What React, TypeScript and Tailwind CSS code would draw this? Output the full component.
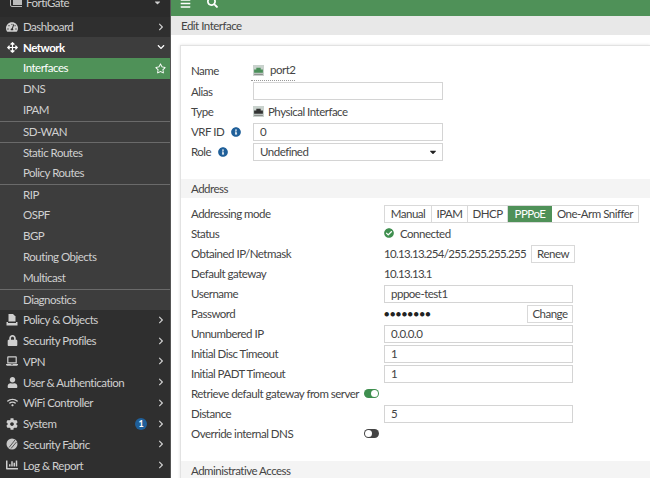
import type { ReactNode } from "react";
import {
  FaBars,
  FaChevronDown,
  FaChevronRight,
  FaSearch,
  FaArrowsAlt,
  FaTachometerAlt,
  FaLock,
  FaLaptop,
  FaUser,
  FaWifi,
  FaCog,
  FaChartBar,
  FaInfoCircle,
  FaCheckCircle,
  FaRegStar,
  FaCaretDown,
} from "react-icons/fa";

type SideItem = { label: string; icon: ReactNode; badge?: boolean };

const SUB_GROUPS = [
  ["DNS", "IPAM"],
  ["SD-WAN"],
  ["Static Routes", "Policy Routes"],
  ["RIP", "OSPF", "BGP", "Routing Objects", "Multicast"],
  ["Diagnostics"],
];

const LOWER_ITEMS: SideItem[] = [
  { label: "Policy & Objects", icon: <PolicyIcon /> },
  { label: "Security Profiles", icon: <FaLock size={11} /> },
  { label: "VPN", icon: <FaLaptop size={12} /> },
  { label: "User & Authentication", icon: <FaUser size={11} /> },
  { label: "WiFi Controller", icon: <FaWifi size={11} /> },
  { label: "System", icon: <FaCog size={12} />, badge: true },
  { label: "Security Fabric", icon: <FabricIcon /> },
  { label: "Log & Report", icon: <FaChartBar size={12} /> },
];

function PolicyIcon() {
  return (
    <svg width="12" height="12" viewBox="0 0 12 12" fill="#cfcfcf">
      <path d="M2.500 0H7l2.500 2.500V7.500H2.500z" />
      <path d="M0.500 8h1.500v1H10V8h1.500v3.500H0.500z" />
    </svg>
  );
}

function FabricIcon() {
  return (
    <svg width="12" height="12" viewBox="0 0 12 12">
      <circle cx="6" cy="6" r="5.5" fill="#c8c8c8" />
      <path d="M3 9.500 9 2M5 10.500 10.500 4" stroke="#555" strokeWidth="1" />
    </svg>
  );
}

function PortIcon({ dark }: { dark?: boolean }) {
  return (
    <svg width="11" height="11" viewBox="0 0 10 10" className="shrink-0">
      <rect x="0" y="0" width="10" height="10" fill="#c9d2cd" />
      <path d="M1 7V4h2V2.500h4V4h2v3z" fill={dark ? "#333" : "#4b8f5a"} />
      <rect x="1" y="8" width="8" height="1" fill="#888" />
    </svg>
  );
}

function SideRow({ item }: { item: SideItem }) {
  return (
    <div className="flex h-[20.750px] items-center bg-[#2f2f2f] text-[#d0d0d0]">
      <span className="flex w-[23px] shrink-0 justify-center pl-[1px] text-[#cfcfcf]">{item.icon}</span>
      <span className="flex-1 truncate">{item.label}</span>
      {item.badge && (
        <span className="mr-[10px] flex h-[12px] w-[12px] items-center justify-center rounded-full bg-[#1f5f99] text-[9px] font-bold tracking-normal text-white">
          1
        </span>
      )}
      <FaChevronRight size={8} className="mr-[5px] w-[8px] text-[#cfcfcf]" />
    </div>
  );
}

function Sidebar() {
  return (
    <aside className="w-[170px] shrink-0 overflow-hidden bg-[#2f2f2f] text-[11.500px] tracking-[-0.5px]">
      <div className="-mt-[7px] flex h-[23.500px] items-center bg-[#2b2b2b] pb-[5px] text-[#cfcfcf]">
        <span className="w-[26px] shrink-0 pl-[9px]">
          <svg width="13" height="11" viewBox="0 0 13 11">
            <rect x="4" y="1" width="9" height="7" fill="#bbb" />
            <path d="M1.500 0v8q0 1.500 1.500 1.500h10" stroke="#bbb" fill="none" />
          </svg>
        </span>
        <span className="flex-1">FortiGate</span>
        <FaCaretDown size={9} className="mr-[8px] text-[#cfcfcf]" />
      </div>
      <div className="flex h-[20.500px] items-center bg-[#2f2f2f] text-[#d0d0d0]">
        <span className="flex w-[23px] shrink-0 justify-center pl-[1px]">
          <FaTachometerAlt size={12} />
        </span>
        <span className="flex-1">Dashboard</span>
        <FaChevronRight size={8} className="mr-[5px] w-[8px]" />
      </div>
      <div className="flex h-[20.500px] items-center bg-[#3d3d3d] font-bold text-white">
        <span className="flex w-[23px] shrink-0 justify-center pl-[1px]">
          <FaArrowsAlt size={11} />
        </span>
        <span className="flex-1">Network</span>
        <FaChevronDown size={8} className="mr-[5px] w-[8px]" />
      </div>
      <div className="flex h-[21px] items-center bg-[#4f9158] pl-[23px] text-white">
        <span className="flex-1">Interfaces</span>
        <FaRegStar size={11} className="mr-[4px]" />
      </div>
      {SUB_GROUPS.map((group, i) => (
        <div key={i} className="bg-[#3d3d3d]">
          {group.map((label, j) => (
            <div
              key={label}
              className={`flex h-[21px] items-center pl-[23px] text-[#d0d0d0] ${
                i > 0 && j === 0 ? "border-t border-[#6a6a6a]" : ""
              }`}
            >
              {label}
            </div>
          ))}
        </div>
      ))}
      {LOWER_ITEMS.map((item) => (
        <SideRow key={item.label} item={item} />
      ))}
    </aside>
  );
}

function TextBox({ value, className = "w-[190px]" }: { value?: string; className?: string }) {
  return (
    <div className={`flex h-[18px] items-center border border-[#d4d4d4] bg-white pl-[6px] text-[#444] ${className}`}>
      {value}
    </div>
  );
}

function Row({ label, children }: { label: string; children?: ReactNode }) {
  return (
    <div className="flex h-[20px] items-center">
      <div className="w-[193px] shrink-0 whitespace-nowrap pb-[1px] text-[#444]">{label}</div>
      {children}
    </div>
  );
}

function TopRow({ label, infoGap, children }: { label: string; infoGap?: boolean; children?: ReactNode }) {
  return (
    <div className="flex h-[20.200px] items-center">
      <div className={`flex w-[62px] shrink-0 items-center text-[#444] ${infoGap ? "gap-[7px]" : ""}`}>
        <span>{label}</span>
        {infoGap && <FaInfoCircle size={10} className="text-[#1f5f99]" />}
      </div>
      {children}
    </div>
  );
}

function Toggle({ on }: { on?: boolean }) {
  return (
    <span
      className={
        on
          ? "flex h-[9px] w-[15px] items-center justify-end rounded-full bg-[#3f8f4f] px-[1px]"
          : "flex h-[9px] w-[15px] items-center justify-start rounded-full bg-[#444] px-[1px]"
      }
    >
      <span className="h-[7px] w-[7px] rounded-full bg-white" />
    </span>
  );
}

const MODES = [
  { label: "Manual", width: "w-[47px]" },
  { label: "IPAM", width: "w-[36px]" },
  { label: "DHCP", width: "w-[40px]" },
  { label: "PPPoE", width: "w-[44px]" },
  { label: "One-Arm Sniffer", width: "w-[86px]" },
];

function SectionHead({ title }: { title: string }) {
  return <div className="flex h-[19px] items-center bg-[#f4f4f4] pl-[10px] text-[#444]">{title}</div>;
}

function Main() {
  return (
    <main className="flex min-w-0 flex-1 flex-col border-l border-[#555] bg-white text-[11.500px] font-normal tracking-[-0.5px] text-[#444]">
      <div className="flex h-[16px] shrink-0 items-start gap-[16px] overflow-hidden bg-[#4f9158] pl-[9px] text-white">
        <FaBars size={11} className="-mt-[2px]" />
        <FaSearch size={11} className="-mt-[3px]" />
      </div>
      <div className="flex h-[19px] shrink-0 items-center bg-[#e8e8e8] pl-[10px] text-[#444]">Edit Interface</div>
      <div className="ml-[9px] mt-[10px] flex-1 border-l border-t border-[#e2e2e2] shadow-[0_0_3px_rgba(0,0,0,0.12)]">
        <div className="pb-[17px] pl-[10px] pt-[15px]">
          <TopRow label="Name">
            <span className="-ml-[2px] flex items-center gap-[6px] border-b border-dotted border-[#999] pb-[1px] pl-[2px] text-[#444]">
              <PortIcon />
              port2
            </span>
          </TopRow>
          <TopRow label="Alias">
            <TextBox />
          </TopRow>
          <TopRow label="Type">
            <span className="flex items-center gap-[4px]">
              <PortIcon dark />
              Physical Interface
            </span>
          </TopRow>
          <TopRow label="VRF ID" infoGap>
            <TextBox value="0" />
          </TopRow>
          <TopRow label="Role" infoGap>
            <div className="flex h-[18px] w-[190px] items-center justify-between border border-[#d4d4d4] bg-white pl-[6px] pr-[4px]">
              Undefined
              <FaCaretDown size={10} className="text-[#222]" />
            </div>
          </TopRow>
        </div>
        <SectionHead title="Address" />
        <div className="pl-[10px] pt-[6px]">
          <Row label="Addressing mode">
            <div className="flex h-[18px] whitespace-nowrap border border-[#d9d9d9]">
              {MODES.map((m) => (
                <span
                  key={m.label}
                  className={
                    m.label === "PPPoE"
                      ? `flex items-center justify-center bg-[#4f9158] text-white ${m.width}`
                      : `flex items-center justify-center border-r border-[#d9d9d9] last:border-r-0 ${m.width}`
                  }
                >
                  {m.label}
                </span>
              ))}
            </div>
          </Row>
          <Row label="Status">
            <span className="flex items-center gap-[6px] pb-[1px]">
              <FaCheckCircle size={10} className="text-[#3f8f4f]" />
              <span>Connected</span>
            </span>
          </Row>
          <Row label="Obtained IP/Netmask">
            <span className="w-[147px] whitespace-nowrap pb-[1px] tracking-[-0.7px]">10.13.13.254/255.255.255.255</span>
            <span className="flex h-[18px] w-[44px] items-center justify-center border border-[#d9d9d9]">Renew</span>
          </Row>
          <Row label="Default gateway">
            <span className="pb-[1px] tracking-[-0.7px]">10.13.13.1</span>
          </Row>
          <Row label="Username">
            <TextBox value="pppoe-test1" className="w-[189px]" />
          </Row>
          <Row label="Password">
            <span className="w-[143px] text-[9px] tracking-[0.5px] text-[#222]">●●●●●●●●</span>
            <span className="flex h-[18px] w-[46px] items-center justify-center border border-[#d9d9d9]">Change</span>
          </Row>
          <Row label="Unnumbered IP">
            <TextBox value="0.0.0.0" className="w-[189px]" />
          </Row>
          <Row label="Initial Disc Timeout">
            <TextBox value="1" className="w-[189px]" />
          </Row>
          <Row label="Initial PADT Timeout">
            <TextBox value="1" className="w-[189px]" />
          </Row>
          <Row label="Retrieve default gateway from server">
            <span className="-ml-[20px]">
              <Toggle on />
            </span>
          </Row>
          <Row label="Distance">
            <TextBox value="5" className="w-[189px]" />
          </Row>
          <Row label="Override internal DNS">
            <span className="-ml-[20px]">
              <Toggle />
            </span>
          </Row>
        </div>
        <div className="mt-[17px]">
          <SectionHead title="Administrative Access" />
        </div>
      </div>
    </main>
  );
}

export default function App() {
  return (
    <div className="flex h-[478px] w-[650px] overflow-hidden bg-white font-['Lato',sans-serif]">
      <Sidebar />
      <Main />
    </div>
  );
}
